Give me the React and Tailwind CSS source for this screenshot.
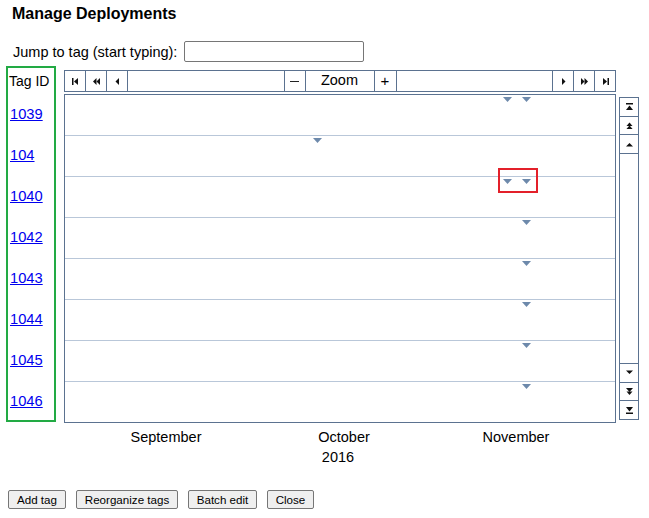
import React from 'react';

const tags = ['1039', '104', '1040', '1042', '1043', '1044', '1045', '1046'];

// marker positions (px from left of the timeline body) for each tag row
const markers = [
  [438, 457],
  [248],
  [438, 457],
  [457],
  [457],
  [457],
  [457],
  [457],
];

const Tri = ({ left }) => (
  <svg className="absolute top-[2px]" style={{ left }} width="9" height="5" viewBox="0 0 9 5">
    <polygon points="0,0 9,0 4.5,5" fill="#6d89ab" />
  </svg>
);

const NavIcon = ({ kind }) => {
  const paths = {
    first: (
      <>
        <rect x="0" y="0" width="1.5" height="7" />
        <polygon points="6,0 6,7 2,3.5" />
      </>
    ),
    prevPage: (
      <>
        <polygon points="3.5,0 3.5,7 0,3.5" />
        <polygon points="7,0 7,7 3.5,3.5" />
      </>
    ),
    prev: <polygon points="5,0 5,7 1.5,3.5" />,
    next: <polygon points="2,0 2,7 5.5,3.5" />,
    nextPage: (
      <>
        <polygon points="0,0 0,7 3.5,3.5" />
        <polygon points="3.5,0 3.5,7 7,3.5" />
      </>
    ),
    last: (
      <>
        <polygon points="1,0 1,7 5,3.5" />
        <rect x="5.5" y="0" width="1.5" height="7" />
      </>
    ),
    top: (
      <>
        <rect x="0" y="0" width="7" height="1.5" />
        <polygon points="0,7 7,7 3.5,2.5" />
      </>
    ),
    pageUp: (
      <>
        <polygon points="0.5,4 6.5,4 3.5,0.5" />
        <polygon points="0,7.5 7,7.5 3.5,3.5" />
      </>
    ),
    up: <polygon points="0,5.5 7,5.5 3.5,2" />,
    down: <polygon points="0,1.5 7,1.5 3.5,5" />,
    pageDown: (
      <>
        <polygon points="0,0 7,0 3.5,4" />
        <polygon points="0.5,3.5 6.5,3.5 3.5,7" />
      </>
    ),
    bottom: (
      <>
        <polygon points="0,0 7,0 3.5,4.5" />
        <rect x="0" y="5.5" width="7" height="1.5" />
      </>
    ),
  };
  return (
    <svg width="7" height="7" viewBox="0 0 7 7" fill="#111">
      {paths[kind]}
    </svg>
  );
};

const ToolBtn = ({ kind, last }) => (
  <div
    className={`flex items-center justify-center h-full ${last ? 'w-[20px]' : 'w-[21px] border-r border-[#5b7290]'}`}
  >
    <NavIcon kind={kind} />
  </div>
);

const ScrollBtn = ({ kind, bottom }) => (
  <div
    className={`flex items-center justify-center h-[18.7px] ${bottom ? 'border-t' : 'border-b'} border-[#5b7290]`}
  >
    <NavIcon kind={kind} />
  </div>
);

export default function App() {
  return (
    <div className="w-[649px] h-[518px] bg-white text-black font-['Liberation_Sans',Arial,sans-serif] overflow-hidden">
      <h1 className="pl-3 pt-[5px] text-[16px] leading-[18px] font-bold">Manage Deployments</h1>

      <div className="flex items-center mt-[18px] pl-[13px] h-[21px]">
        <span className="text-[14.5px] leading-[18px]">Jump to tag (start typing):</span>
        <input
          type="text"
          className="ml-[7px] w-[180px] h-[21px] border border-[#767676] rounded-[2px] outline-none"
        />
      </div>

      <div className="flex items-start mt-[4px] pl-[6px]">
        {/* tag id column */}
        <div className="w-[50px] h-[356px] border-2 border-[#22aa44] overflow-hidden">
          <div className="h-[26px] flex items-center pl-[1px] text-[14px]">Tag ID</div>
          {tags.map((t) => (
            <div key={t} className="h-[41px] flex items-center pl-[2px]">
              <a href="#" className="text-[14.7px] text-[#0000ee] underline">
                {t}
              </a>
            </div>
          ))}
        </div>

        {/* timeline */}
        <div className="ml-[8px] mt-[4px] w-[552px]">
          <div className="h-[22px] flex items-center border border-[#5b7290] text-[14.5px]">
            <ToolBtn kind="first" />
            <ToolBtn kind="prevPage" />
            <ToolBtn kind="prev" />
            <div className="flex-1 h-full border-r border-[#5b7290]" />
            <div className="w-[21px] h-full flex items-center justify-center border-r border-[#5b7290]">
              <div className="w-[9px] h-[1px] bg-[#222]" />
            </div>
            <div className="w-[69px] h-full flex items-center justify-center border-r border-[#5b7290]">Zoom</div>
            <div className="w-[22px] h-full flex items-center justify-center border-r border-[#5b7290] text-[15px]">+</div>
            <div className="flex-1 h-full border-r border-[#5b7290]" />
            <ToolBtn kind="next" />
            <ToolBtn kind="nextPage" />
            <ToolBtn kind="last" last />
          </div>

          <div className="relative mt-[2px] border border-[#5b7290]">
            {tags.map((t, i) => (
              <div
                key={t}
                className={`relative ${i < tags.length - 1 ? 'h-[41px] border-b border-[#b9c7d9]' : 'h-[40px]'}`}
              >
                {markers[i].map((l) => (
                  <Tri key={l} left={l} />
                ))}
              </div>
            ))}
            <div className="absolute left-[433px] top-[73px] w-[40px] h-[25px] border-2 border-[#e3202a]" />
          </div>

          <div className="relative h-[45px] text-[14.5px] leading-[18px]">
            <span className="absolute top-[5px] left-[102px] -translate-x-1/2">September</span>
            <span className="absolute top-[5px] left-[280px] -translate-x-1/2">October</span>
            <span className="absolute top-[5px] left-[452px] -translate-x-1/2">November</span>
            <span className="absolute top-[25px] left-[274px] -translate-x-1/2">2016</span>
          </div>
        </div>

        {/* vertical scroller */}
        <div className="ml-[3px] mt-[31px] w-[20px] h-[323px] border border-[#5b7290] flex flex-col">
          <ScrollBtn kind="top" />
          <ScrollBtn kind="pageUp" />
          <ScrollBtn kind="up" />
          <div className="flex-1" />
          <ScrollBtn kind="down" bottom />
          <ScrollBtn kind="pageDown" bottom />
          <ScrollBtn kind="bottom" bottom />
        </div>
      </div>

      <div className="flex gap-[10px] pl-[8px] mt-[22px] text-[11.6px]">
        {[
          ['Add tag', 'w-[58px]'],
          ['Reorganize tags', 'w-[102px]'],
          ['Batch edit', 'w-[69px]'],
          ['Close', 'w-[47px]'],
        ].map(([label, w]) => (
          <button
            key={label}
            className={`${w} h-[19px] flex items-center justify-center bg-[#efefef] border border-[#767676] rounded-[2px]`}
          >
            {label}
          </button>
        ))}
      </div>
    </div>
  );
}
